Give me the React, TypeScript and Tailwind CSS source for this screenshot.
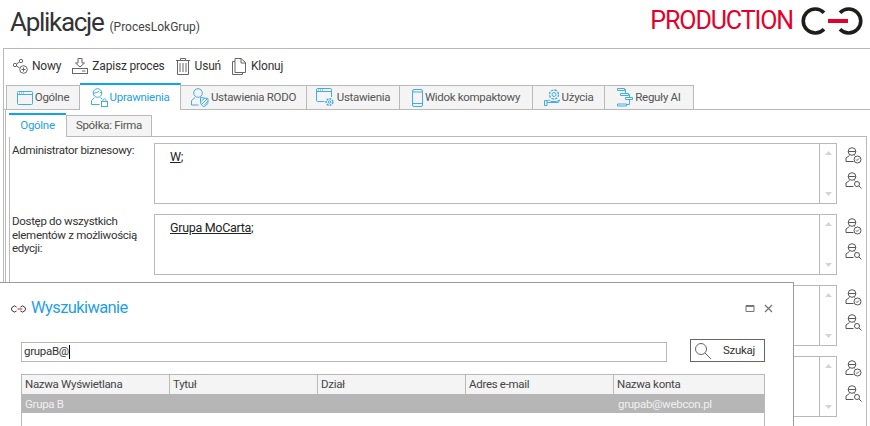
import React from "react";

const font = { fontFamily: 'Roboto, "Open Sans", sans-serif' };
const blue = "#45abe6";

function Browser() {
  return (
    <svg width="16" height="14" viewBox="0 0 16 14" fill="none" stroke={blue}>
      <rect x="0.500" y="0.500" width="15" height="13" rx="1" />
      <path d="M.5 3.500h15" />
      <path d="M2 2h1M4 2h1M6 2h1" />
    </svg>
  );
}
function UserLock() {
  return (
    <svg width="17" height="19" viewBox="0 0 17 19" fill="none" stroke={blue}>
      <circle cx="6.500" cy="5" r="4.300" />
      <path d="M2.300 5c2.200 0 5-.5 6-2.200M9 4c.6.600 1.300 1 1.800 1" />
      <path d="M3.500 9.500.5 12.500v4h8M9.500 9.500l1.500 1.500" />
      <rect x="10.500" y="13.500" width="6" height="5" />
      <path d="M12 13.500v-1.200a1.500 1.500 0 013 0v1.200" />
    </svg>
  );
}
function UserShield() {
  return (
    <svg width="18" height="19" viewBox="0 0 18 19" fill="none" stroke={blue}>
      <circle cx="7" cy="5" r="4.300" />
      <path d="M4 9.500.5 12.500v4.500h7" />
      <path d="M9.500 9.500l7.500 1v3.500c0 2.500-2.500 4-4 4.500-1.500-.5-3.500-2-3.500-4.500z" />
      <path d="M11 16l5-5M10.500 13l3-2.500M13.500 17l3-3.500" />
    </svg>
  );
}
function WinGear() {
  return (
    <svg width="19" height="19" viewBox="0 0 19 19" fill="none" stroke={blue}>
      <path d="M8.500 13.500H1.500a1 1 0 01-1-1v-11a1 1 0 011-1h13a1 1 0 011 1V9" />
      <path d="M.5 3.500h15M2 2h1M4 2h1M6 2h1" />
      <circle cx="13.500" cy="14" r="3.300" strokeDasharray="2 1" strokeWidth="1.600" />
      <circle cx="13.500" cy="14" r="1.200" />
    </svg>
  );
}
function Phone() {
  return (
    <svg width="11" height="18" viewBox="0 0 11 18" fill="none" stroke={blue}>
      <rect x="0.500" y="0.500" width="10" height="17" rx="1.500" />
      <path d="M.5 3h10M.5 14.500h10" />
    </svg>
  );
}
function HandGear() {
  return (
    <svg width="16" height="17" viewBox="0 0 16 17" fill="none" stroke={blue}>
      <circle cx="10" cy="5.500" r="4.500" strokeDasharray="2.500 1" strokeWidth="1.300" />
      <circle cx="10" cy="5.500" r="2" />
      <path d="M.5 11.500h2.500v5H.5zM3 12c2-1.500 3.500-.5 4 .5h5.500l3-1.500-1 2.500H3" />
    </svg>
  );
}
function Rules() {
  return (
    <svg width="16" height="19" viewBox="0 0 16 19" fill="none" stroke={blue}>
      <path d="M.5 .5h7v2h-7zM3.500 5.500h8v2h-8zM8.500 9.500h7v2h-7zM.5 16h9v2h-9z" />
      <path d="M7.500 1.500h1v4M11.500 6.500h1v3M9.500 16.500h3v-5" />
    </svg>
  );
}

function UserBase() {
  return (
    <>
      <circle cx="7" cy="4.500" r="3.800" />
      <path d="M3.300 4.500h7.400M4.500 8.500 1 11v3.500h7.500M9.500 8.500l1 1" />
    </>
  );
}
function UserCheck() {
  return (
    <svg width="17" height="17" viewBox="0 0 17 17" fill="none" stroke="#555">
      <UserBase />
      <circle cx="12.500" cy="12.500" r="3.500" />
      <path d="M11 12.500l1 1 2-2" />
    </svg>
  );
}
function UserSearch() {
  return (
    <svg width="17" height="17" viewBox="0 0 17 17" fill="none" stroke="#555">
      <UserBase />
      <circle cx="12" cy="12" r="2.500" />
      <path d="M14 14l2.500 2.500" />
    </svg>
  );
}

function Logo({ w = 62, h = 28 }: { w?: number; h?: number }) {
  return (
    <svg width={w} height={h} viewBox="0 0 62 28" fill="none">
      <path d="M23 5.800a12 12 0 1 0 0 16.400" stroke="#1d1d1b" strokeWidth="3.600" />
      <path d="M39 5.800a12 12 0 1 1 0 16.400" stroke="#1d1d1b" strokeWidth="3.600" />
      <path d="M27 14h20" stroke="#e4002b" strokeWidth="4" />
    </svg>
  );
}

const tabs = [
  { label: "Ogólne", w: "w-[74px]", icon: <Browser /> },
  { label: "Uprawnienia", w: "w-[101px]", icon: <UserLock />, active: true },
  { label: "Ustawienia RODO", w: "w-[127px]", icon: <UserShield /> },
  { label: "Ustawienia", w: "w-[94px]", icon: <WinGear /> },
  { label: "Widok kompaktowy", w: "w-[134px]", icon: <Phone /> },
  { label: "Użycia", w: "w-[73px]", icon: <HandGear /> },
  { label: "Reguły AI", w: "w-[90px]", icon: <Rules /> },
];

function ToolItem({ icon, label, gap = "gap-[4px]" }: { icon: React.ReactNode; label: string; gap?: string }) {
  return (
    <div className={`flex items-center ${gap}`}>
      {icon}
      <span className="text-[12px] text-[#333] tracking-[-0.200px]">{label}</span>
    </div>
  );
}

function Row({ label, value }: { label: React.ReactNode; value?: string }) {
  return (
    <div className="flex h-[61px] shrink-0">
      <div className="w-[142px] text-[11.500px] leading-[13.500px] text-[#333] pt-[1px] shrink-0">{label}</div>
      <div className="w-[683px] flex border border-[#b9b9b9] shrink-0">
        <div className="flex-1 pl-[15px] pt-[4px] text-[12.500px] text-[#222]">
          {value && (
            <span>
              <span className="underline">{value}</span>;
            </span>
          )}
        </div>
        <div className="w-[17px] border-l border-[#b9b9b9] flex flex-col items-center justify-between py-[7px]">
          <svg width="7" height="4" viewBox="0 0 7 4" fill="#d4d4d4"><path d="M3.500 0 7 4H0z" /></svg>
          <svg width="7" height="4" viewBox="0 0 7 4" fill="#d4d4d4"><path d="M3.500 4 7 0H0z" /></svg>
        </div>
      </div>
      <div className="flex flex-col gap-[8px] pl-[8px] pt-[4px]">
        <UserCheck />
        <UserSearch />
      </div>
    </div>
  );
}

const cols = ["Nazwa Wyświetlana", "Tytuł", "Dział", "Adres e-mail", "Nazwa konta"];

export default function App() {
  return (
    <div className="relative w-[870px] h-[426px] overflow-hidden bg-white tracking-[-0.300px]" style={font}>
      <header className="h-[48px] flex justify-between pl-[10px] pr-[7px]">
        <div className="flex items-baseline gap-[6px] pt-[2px]">
          <span className="text-[26px] text-[#333] leading-[40px] tracking-[-1.300px]">Aplikacje</span>
          <span className="text-[12px] text-[#444] tracking-[0px]">(ProcesLokGrup)</span>
        </div>
        <div className="flex items-center gap-[8px] pb-[6px]">
          <span className="text-[25px] text-[#e4002b] tracking-[-1.100px]">PRODUCTION</span>
          <Logo />
        </div>
      </header>

      <main className="ml-[3px] border-t border-l border-[#b9b9b9] h-[378px]">
        <div className="h-[34px] flex items-center gap-[11px] pl-[9px]">
          <ToolItem
            icon={
              <svg width="15" height="15" viewBox="0 0 15 15" fill="none" stroke="#666">
                <circle cx="2" cy="6" r="1.700" /><circle cx="8" cy="2" r="1.700" /><circle cx="10.500" cy="10.500" r="3.800" />
                <path d="M3.500 5 6.500 3M3.500 7l3 2M10.500 8.500v4M8.500 10.500h4" />
              </svg>
            }
            label="Nowy"
          />
          <ToolItem
            icon={
              <svg width="16" height="16" viewBox="0 0 16 16" fill="none" stroke="#666">
                <path d="M6 .5h4v4.500h2.500L8 9 3.500 5H6z" /><rect x="0.500" y="10.500" width="15" height="5" /><path d="M10 13h3.500" />
              </svg>
            }
            label="Zapisz proces"
          />
          <ToolItem
            gap="gap-[5px]"
            icon={
              <svg width="14" height="17" viewBox="0 0 14 17" fill="none" stroke="#666">
                <path d="M0 2.500h14M4.500 2.500V.5h5v2M1.500 2.500v14h11v-14M4 5v9M7 5v9M10 5v9" />
              </svg>
            }
            label="Usuń"
          />
          <ToolItem
            gap="gap-[5px]"
            icon={
              <svg width="14" height="17" viewBox="0 0 14 17" fill="none" stroke="#666">
                <path d="M3 3.500H.5v13h10v-2.500M3 .5h6l4.500 4v10H3z" /><path d="M9 .5V5h4.500" />
              </svg>
            }
            label="Klonuj"
          />
        </div>

        <div className="h-[27px] flex items-end border-b border-[#b9b9b9] pl-[3px]">
          {tabs.map((t) => (
            <div
              key={t.label}
              className={`${t.w} flex items-center justify-center gap-[2px] text-[11.500px] ${
                t.active
                  ? "h-[27px] border-t-2 border-t-[#0ea5f0] border-r border-r-[#b9b9b9] bg-white text-[#1f9fe8] -mb-px"
                  : "h-[24px] border-x border-t border-[#b9b9b9] -ml-px bg-[#f4f4f4] text-[#555]"
              }`}
            >
              {t.icon}
              <span>{t.label}</span>
            </div>
          ))}
        </div>

        <div className="ml-[1px] border-l border-[#b9b9b9] pl-[3px] pt-[3px] h-[316px]">
          <div className="h-[23px] flex items-end">
            <div className="w-[57px] h-[24px] border-t-2 border-t-[#0ea5f0] bg-white text-[11.500px] text-[#1f9fe8] flex items-center justify-center -mb-px relative z-10">Ogólne</div>
            <div className="w-[86px] h-[21px] border-x border-t border-[#b9b9b9] bg-[#f4f4f4] text-[11.500px] text-[#555] flex items-center justify-center">Spółka: Firma</div>
          </div>
          <div className="border-t border-l border-r border-[#b9b9b9] w-[858px] h-[291px] pt-[6px] pl-[2px] flex flex-col gap-[10px]">
            <Row label="Administrator biznesowy:" value="W" />
            <Row label={<>Dostęp do wszystkich<br />elementów z możliwością<br />edycji:</>} value="Grupa MoCarta" />
            <Row label="" />
            <Row label="" />
          </div>
        </div>
      </main>

      <section className="absolute left-0 top-[282px] w-[794px] h-[144px] bg-white border-t border-r border-[#9a9a9a] pl-[11px]">
        <div className="h-[48px] pt-[3px] flex items-center gap-[5px] pr-[18px]">
          <Logo w={15} h={8} />
          <span className="text-[16.500px] text-[#1f9fe8] flex-1 tracking-[-0.600px]">Wyszukiwanie</span>
          <svg width="30" height="9" viewBox="0 0 30 9" fill="none" stroke="#777">
            <path d="M1 1.500h8v6H1zM1 2.500h8" />
            <path d="M20 1l7 7M27 1l-7 7" strokeWidth="1.300" />
          </svg>
        </div>
        <div className="pl-[10px] w-[764px]">
          <div className="flex items-center mt-[8px] h-[23px]">
            <div className="w-[646px] h-[20px] border border-[#b9b9b9] flex items-center pl-[2px] text-[11.500px] text-[#333] mt-[3px]">
              grupaB@<span className="inline-block w-px h-[14px] bg-black" />
            </div>
            <div className="ml-[23px] w-[75px] h-[23px] border border-[#666] flex items-center pl-[3px] gap-[11px] text-[11.500px] text-[#333]">
              <svg width="18" height="18" viewBox="0 0 18 18" fill="none" stroke="#666">
                <circle cx="7" cy="7" r="5.500" /><path d="M11 11l6 6" />
              </svg>
              Szukaj
            </div>
          </div>
          <div className="mt-[12px] w-[744px] border-t border-l border-r border-[#b9b9b9] h-[60px]">
            <div className="grid grid-cols-[148px_148px_148px_148px_150px] h-[19px] bg-[#f4f4f4]">
              {cols.map((c, i) => (
                <div key={c} className={`pl-[3px] pt-[1px] text-[11.500px] text-[#444] flex items-center ${i < 4 ? "border-r border-[#b9b9b9]" : ""}`}>{c}</div>
              ))}
            </div>
            <div className="grid grid-cols-[148px_148px_148px_148px_150px] h-[19px] pt-[2px] bg-[#b6b6b6] text-[11.500px] text-[#f0f0f0] items-center">
              <div className="pl-[3px]">Grupa B</div><div /><div /><div /><div className="pl-[4px]">grupab@webcon.pl</div>
            </div>
          </div>
        </div>
      </section>
    </div>
  );
}
